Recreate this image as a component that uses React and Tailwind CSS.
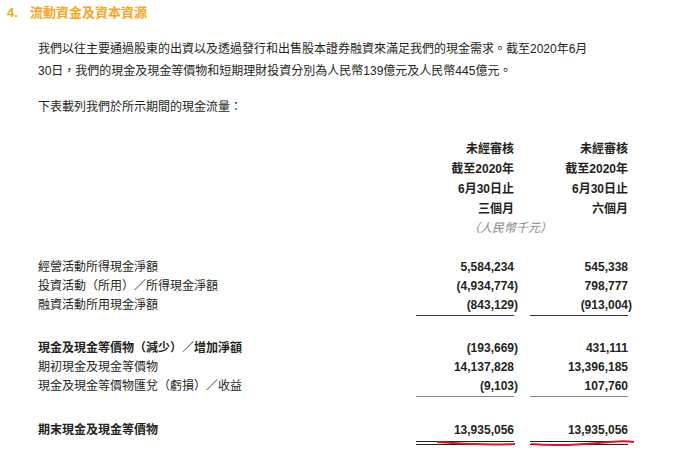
export default function App() {
  const font = { fontFamily: '"Liberation Sans", "Noto Sans CJK TC", sans-serif' };
  const Num = ({ v }) => {
    const neg = v.startsWith("(");
    return (
      <div className="text-right font-bold">
        {neg ? <span className="mr-[-4px]">{v}</span> : <span>{v}</span>}
      </div>
    );
  };
  const Row = ({ label, a, b, bold }) => (
    <div className="grid grid-cols-[378px_98px_16px_98px] h-[19px] items-center">
      <div className={bold ? "font-bold" : ""}>{label}</div>
      <Num v={a} />
      <div />
      <Num v={b} />
    </div>
  );
  const Rule = ({ cls }) => (
    <div className="grid grid-cols-[378px_98px_16px_98px]">
      <div />
      <div className={cls} />
      <div />
      <div className={cls} />
    </div>
  );
  return (
    <div className="w-[686px] h-[458px] bg-white text-[12px] text-[#231f20] relative overflow-hidden" style={font}>
      <div className="flex items-center pt-[4px] h-[22px] text-[#f5a623] font-bold text-[13px]">
        <span className="ml-[7px] w-[23px]">4.</span>
        <span>流動資金及資本資源</span>
      </div>
      <div className="ml-[38px] mt-[16px] leading-[22px]">
        <div>我們以往主要通過股東的出資以及透過發行和出售股本證券融資來滿足我們的現金需求。截至2020年6月</div>
        <div>30日，我們的現金及現金等價物和短期理財投資分別為人民幣139億元及人民幣445億元。</div>
        <div className="mt-[14px]">下表載列我們於所示期間的現金流量：</div>
      </div>
      <div className="ml-[38px] mt-[21px]">
        <div className="grid grid-cols-[378px_98px_16px_98px] leading-[20px] font-bold">
          <div />
          <div className="text-right">未經審核<br />截至2020年<br />6月30日止<br />三個月</div>
          <div />
          <div className="text-right">未經審核<br />截至2020年<br />6月30日止<br />六個月</div>
        </div>
        <div className="grid grid-cols-[378px_212px] h-[18px] items-center">
          <div />
          <div className="text-center italic text-[#8a8a8a] pr-[24px]">（人民幣千元）</div>
        </div>
        <div className="h-[20px]" />
        <Row label="經營活動所得現金淨額" a="5,584,234" b="545,338" />
        <Row label="投資活動（所用）／所得現金淨額" a="(4,934,774)" b="798,777" />
        <Row label="融資活動所用現金淨額" a="(843,129)" b="(913,004)" />
        <Rule cls="h-[1px] bg-[#333] mt-[1px]" />
        <div className="h-[22px]" />
        <Row label="現金及現金等價物（減少）／增加淨額" a="(193,669)" b="431,111" bold />
        <Row label="期初現金及現金等價物" a="14,137,828" b="13,396,185" />
        <Row label="現金及現金等價物匯兌（虧損）／收益" a="(9,103)" b="107,760" />
        <Rule cls="h-[1px] bg-[#888] mt-[1px]" />
        <div className="h-[23px]" />
        <Row label="期末現金及現金等價物" a="13,935,056" b="13,935,056" bold />
        <Rule cls="h-[4px] border-t border-b border-[#222] mt-[2px]" />
      </div>
      <svg className="absolute left-0 top-0" width="686" height="458">
        <path d="M437 442 C460 444 490 445 515 444" stroke="#e8141b" strokeWidth="2" fill="none" />
        <path d="M531 444 C560 447 590 444 610 442 C620 441 628 441 634 442" stroke="#e8141b" strokeWidth="2" fill="none" />
      </svg>
    </div>
  );
}
